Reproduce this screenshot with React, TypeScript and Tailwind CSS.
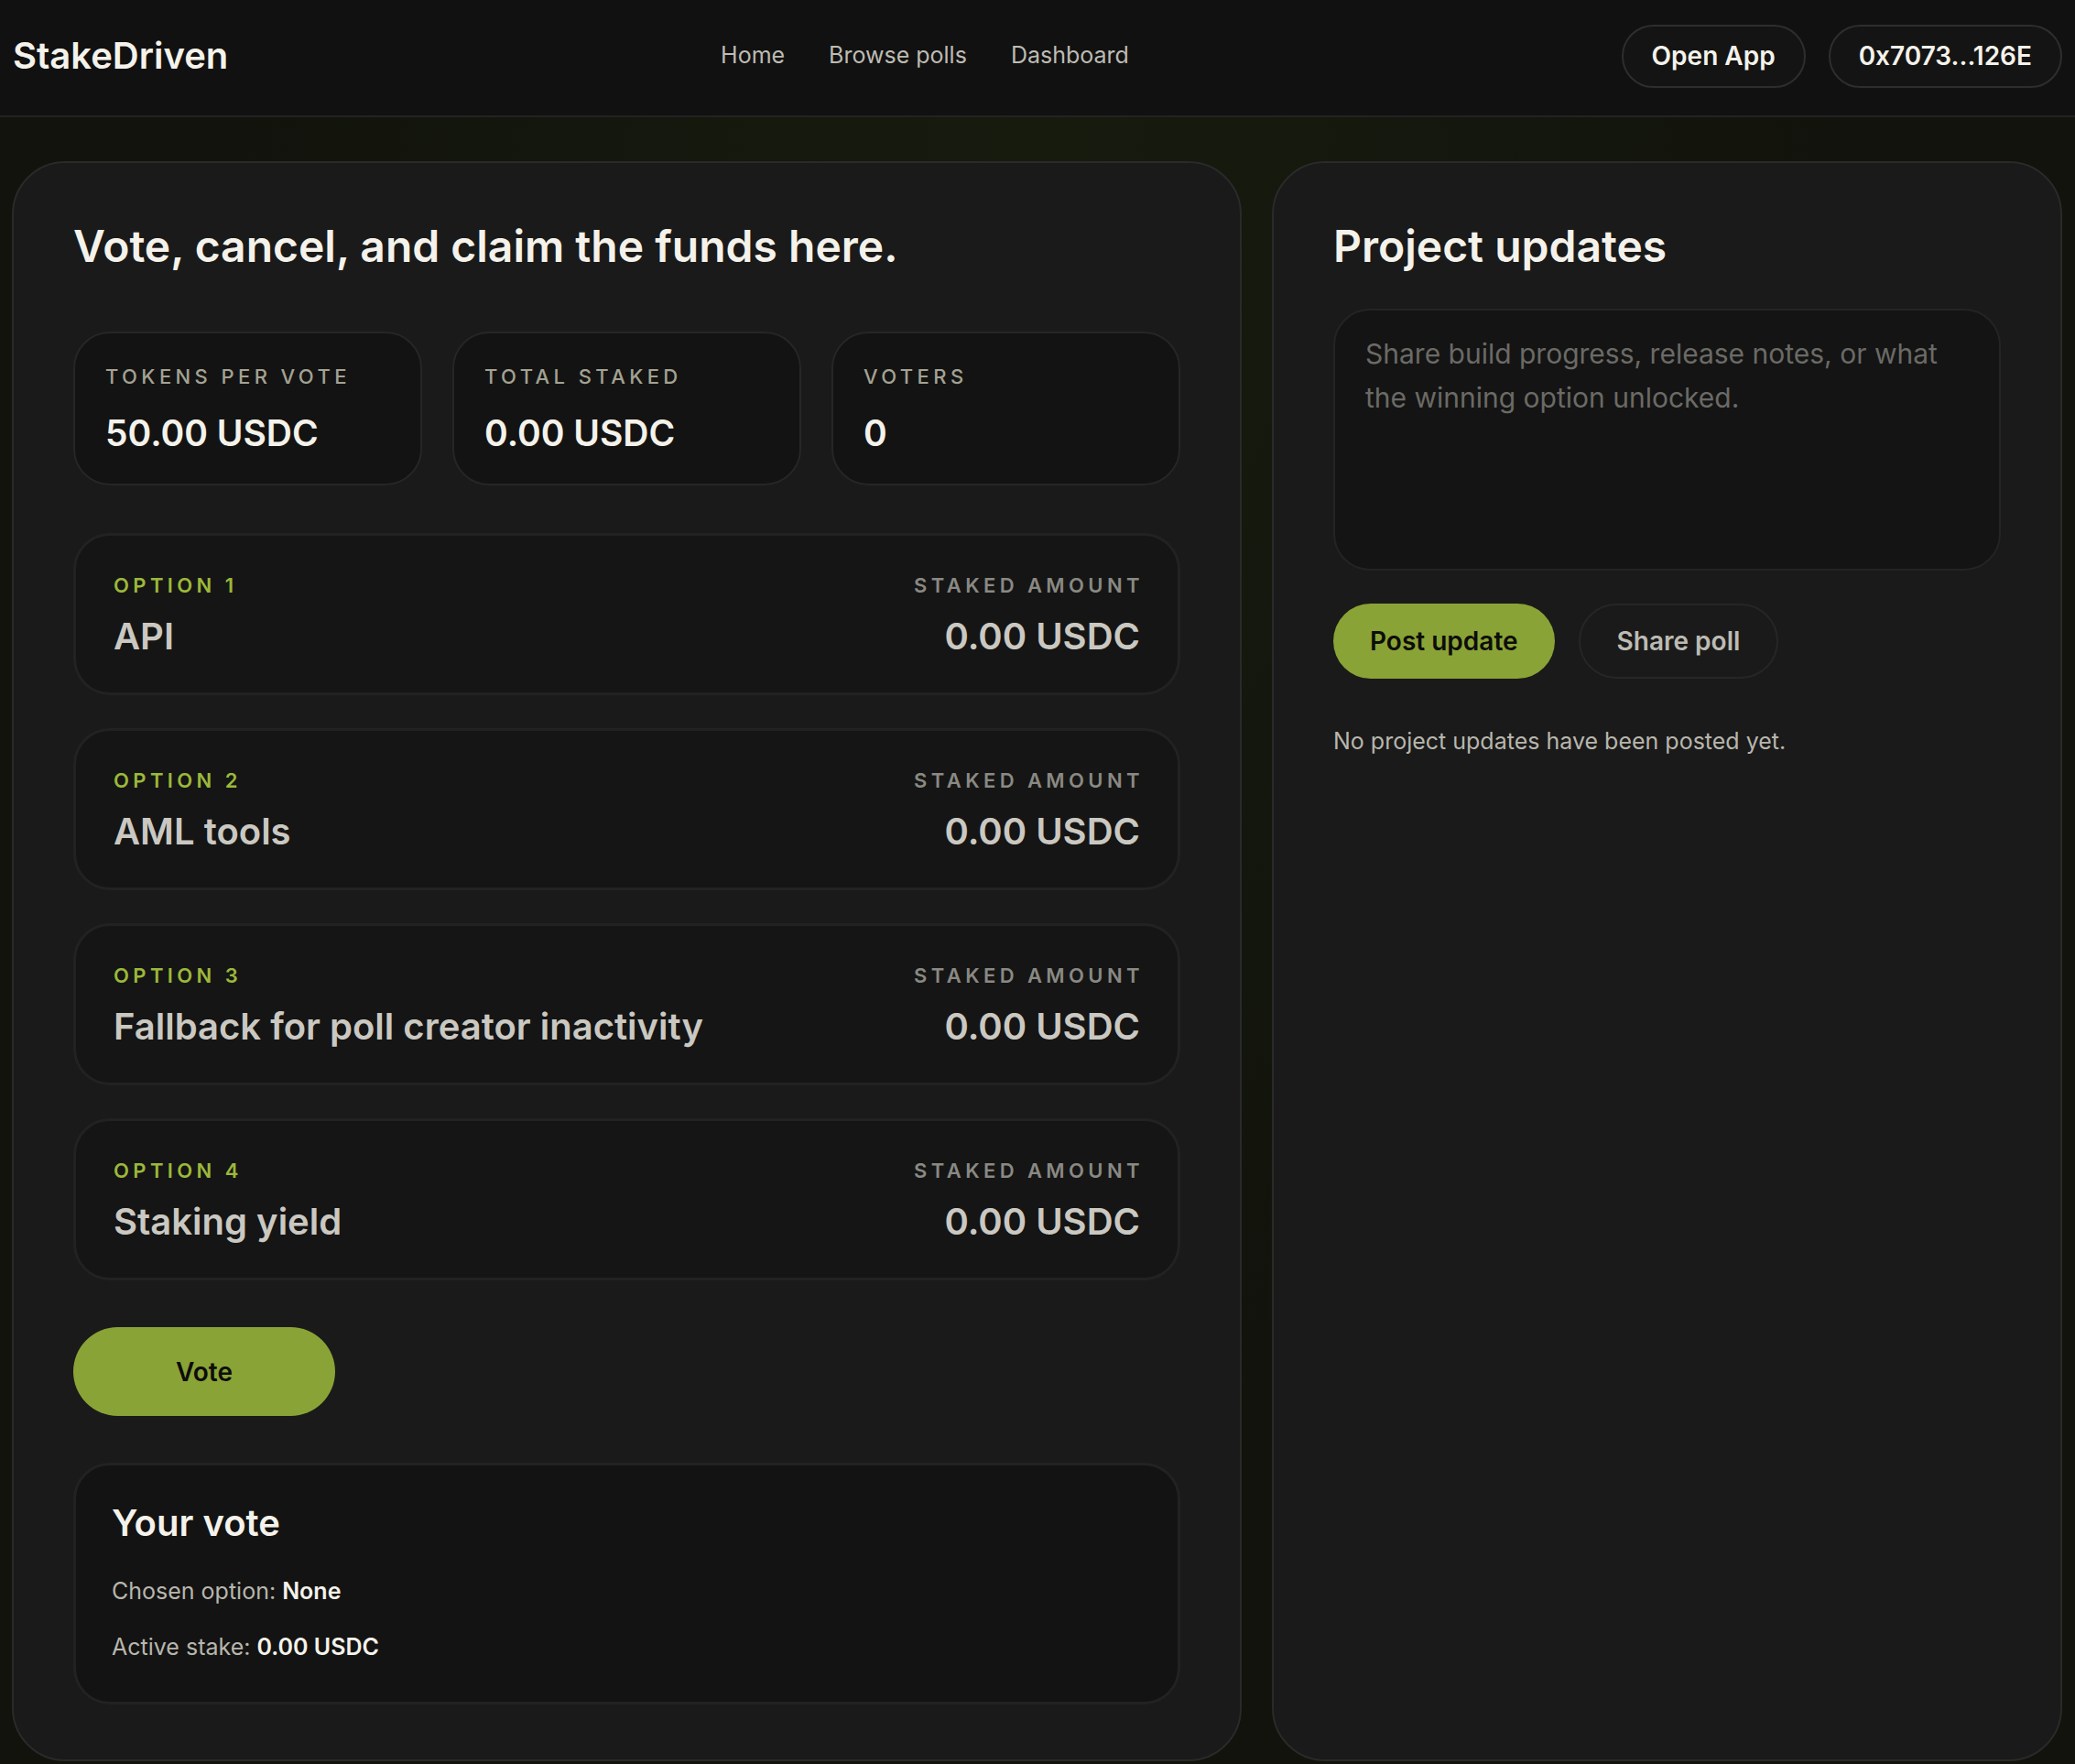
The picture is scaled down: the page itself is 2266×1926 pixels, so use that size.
import React from 'react';

const options = [
  { id: 1, name: 'API' },
  { id: 2, name: 'AML tools' },
  { id: 3, name: 'Fallback for poll creator inactivity' },
  { id: 4, name: 'Staking yield' },
];

const stats = [
  { label: 'Tokens per vote', value: '50.00 USDC' },
  { label: 'Total staked', value: '0.00 USDC' },
  { label: 'Voters', value: '0' },
];

function Header() {
  return (
    <header className="h-[128px] flex items-center justify-between pl-[14px] pr-[14px] pb-[4px] bg-[#111111] border-b-2 border-[#232323]">
      <div className="text-[40px] font-semibold text-[#f4f2ea]">StakeDriven</div>
      <nav className="flex items-center gap-[48px] text-[25px] text-[#bdbbb3]">
        <a>Home</a>
        <a>Browse polls</a>
        <a>Dashboard</a>
      </nav>
      <div className="flex items-center gap-[25px]">
        <button className="h-[69px] px-[31px] rounded-full border-2 border-[#2e2e2e] bg-[#141414] text-[28px] font-semibold text-[#f4f2ea]">
          Open App
        </button>
        <button className="h-[69px] px-[31px] rounded-full border-2 border-[#2e2e2e] bg-[#141414] text-[28px] font-semibold text-[#f4f2ea]">
          0x7073...126E
        </button>
      </div>
    </header>
  );
}

function StatCard({ label, value }: { label: string; value: string }) {
  return (
    <div className="rounded-[40px] border-2 border-[#262626] bg-[#131313] p-[33px] flex flex-col gap-[26px]">
      <div className="text-[22px] leading-[28px] font-medium uppercase tracking-[0.2em] text-[#a3a293]">{label}</div>
      <div className="text-[39px] leading-[44px] font-semibold text-[#f4f2ea]">{value}</div>
    </div>
  );
}

function OptionCard({ id, name }: { id: number; name: string }) {
  return (
    <div className="rounded-[40px] border-[3px] border-[#222222] bg-[#151515] px-[41px] pt-[40px] pb-[38px] flex justify-between">
      <div className="flex flex-col gap-[19px]">
        <div className="text-[22px] leading-[28px] font-semibold uppercase tracking-[0.2em] text-[#9cb83a]">Option {id}</div>
        <div className="text-[40px] leading-[46px] font-semibold text-[#cac8c1]">{name}</div>
      </div>
      <div className="flex flex-col items-end gap-[19px]">
        <div className="text-[22px] leading-[28px] font-semibold uppercase tracking-[0.2em] text-[#8a8983] mr-[-4px]">Staked amount</div>
        <div className="text-[40px] leading-[46px] font-semibold text-[#cac8c1]">0.00 USDC</div>
      </div>
    </div>
  );
}

export default function App() {
  return (
    <div className="min-h-screen bg-[#11130c] font-['Inter','Noto_Sans',sans-serif]">
      <Header />
      <main className="grid grid-cols-[1343px_minmax(0,1fr)] gap-[33px] pl-[13px] pr-[14px] pt-[48px] pb-[4px] bg-[radial-gradient(ellipse_at_50%_0%,#171b0e_0%,#11130c_60%)]">
        <section className="rounded-[58px] border-2 border-[#2a2a2a] bg-[#1a1a1a] p-[65px] pb-[60px] flex flex-col">
          <h1 className="text-[48px] leading-[52px] font-semibold text-[#f4f2ea]">
            Vote, cancel, and claim the funds here.
          </h1>
          <div className="mt-[67px] grid grid-cols-3 gap-[33px]">
            {stats.map((s) => (
              <StatCard key={s.label} label={s.label} value={s.value} />
            ))}
          </div>
          <div className="mt-[52px] flex flex-col gap-[36px]">
            {options.map((o) => (
              <OptionCard key={o.id} id={o.id} name={o.name} />
            ))}
          </div>
          <button className="mt-[51px] w-[286px] h-[97px] rounded-full bg-[#8aa336] text-[28px] font-semibold text-[#0d0d0b]">
            Vote
          </button>
          <div className="mt-[51px] rounded-[40px] border-[3px] border-[#222222] bg-[#131313] px-[39px] pt-[40px] pb-[44px]">
            <h2 className="text-[40px] leading-[46px] font-semibold text-[#f4f2ea]">Your vote</h2>
            <p className="mt-[35px] text-[25px] leading-[32px] text-[#b8b6ad]">
              Chosen option: <span className="font-semibold text-[#f4f2ea]">None</span>
            </p>
            <p className="mt-[29px] text-[25px] leading-[32px] text-[#b8b6ad]">
              Active stake: <span className="font-semibold text-[#f4f2ea]">0.00 USDC</span>
            </p>
          </div>
        </section>

        <section className="rounded-[58px] border-2 border-[#2a2a2a] bg-[#1a1a1a] p-[65px] flex flex-col">
          <h2 className="text-[48px] leading-[52px] font-semibold text-[#f4f2ea]">Project updates</h2>
          <textarea
            className="mt-[42px] h-[286px] w-full resize-none rounded-[40px] border-2 border-[#242424] bg-[#141414] px-[33px] py-[23px] text-[30px] leading-[48px] text-[#e5e5e5] placeholder:text-[#6b6a66] outline-none"
            placeholder="Share build progress, release notes, or what the winning option unlocked."
          />
          <div className="mt-[36px] flex items-center gap-[26px]">
            <button className="h-[82px] px-[40px] rounded-full bg-[#8aa336] text-[28px] font-semibold text-[#0d0d0b]">
              Post update
            </button>
            <button className="h-[82px] px-[40px] rounded-full border-2 border-[#262626] text-[28px] font-semibold text-[#bdbbb3]">
              Share poll
            </button>
          </div>
          <p className="mt-[52px] text-[25px] leading-[32px] text-[#b8b6ad]">No project updates have been posted yet.</p>
        </section>
      </main>
    </div>
  );
}
